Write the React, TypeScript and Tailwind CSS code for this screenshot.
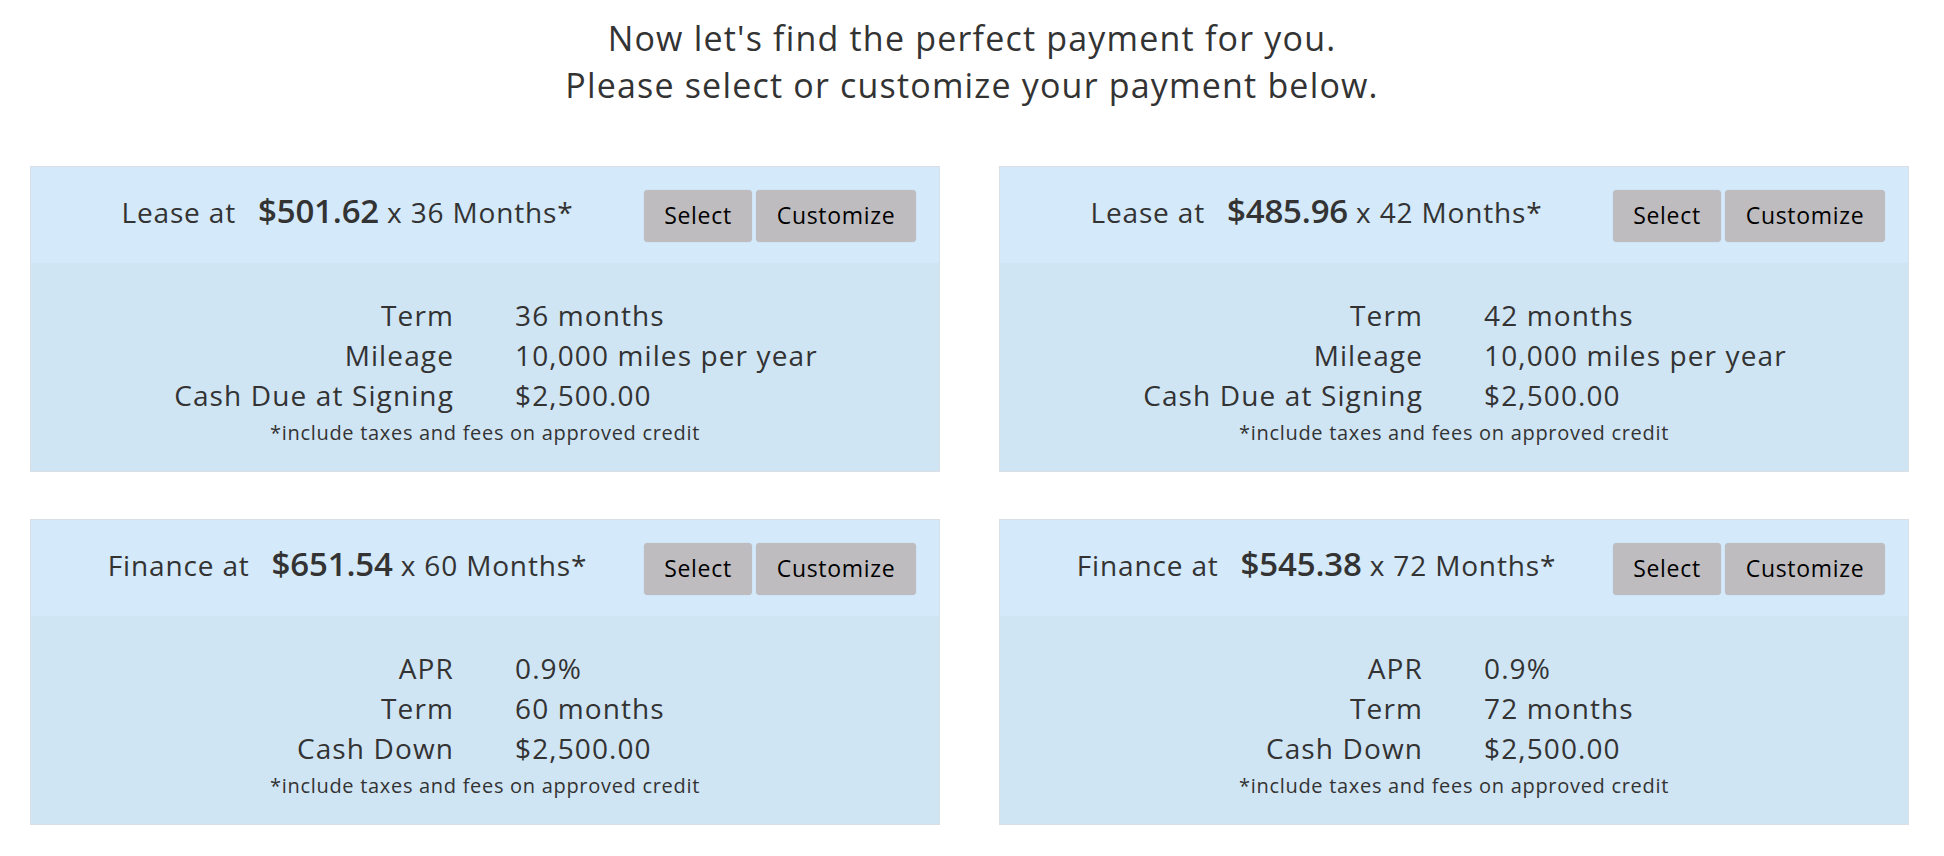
import React from "react";

type Row = { label: string; value: string };

type Offer = {
  kind: string;
  price: string;
  months: number;
  rows: Row[];
};

const OFFERS: Offer[] = [
  {
    kind: "Lease at",
    price: "$501.62",
    months: 36,
    rows: [
      { label: "Term", value: "36 months" },
      { label: "Mileage", value: "10,000 miles per year" },
      { label: "Cash Due at Signing", value: "$2,500.00" },
    ],
  },
  {
    kind: "Lease at",
    price: "$485.96",
    months: 42,
    rows: [
      { label: "Term", value: "42 months" },
      { label: "Mileage", value: "10,000 miles per year" },
      { label: "Cash Due at Signing", value: "$2,500.00" },
    ],
  },
  {
    kind: "Finance at",
    price: "$651.54",
    months: 60,
    rows: [
      { label: "APR", value: "0.9%" },
      { label: "Term", value: "60 months" },
      { label: "Cash Down", value: "$2,500.00" },
    ],
  },
  {
    kind: "Finance at",
    price: "$545.38",
    months: 72,
    rows: [
      { label: "APR", value: "0.9%" },
      { label: "Term", value: "72 months" },
      { label: "Cash Down", value: "$2,500.00" },
    ],
  },
];

function OfferCard({ offer }: { offer: Offer }) {
  return (
    <div className="border border-[#d9dfe5] bg-[#d0e5f4]">
      {/* header: price line + actions */}
      <div className="flex items-center h-[96px] bg-[#d4e9f9]">
        <div className="flex-1 pl-[20px] pb-[9px] flex items-baseline justify-center text-[28px] tracking-[0.03em] text-[#333]">
          <span>{offer.kind}</span>
          <span className="ml-[22px] text-[33px] font-semibold tracking-[-0.005em]">{offer.price}</span>
          <span className="ml-[8px]">x {offer.months} Months*</span>
        </div>
        <div className="shrink-0 flex gap-[4px] pr-[23px] pt-[1px]">
          <button className="h-[52px] w-[108px] rounded-[4px] bg-[#bfbcbf] text-[23px] tracking-[0.03em] text-black shadow-[0_0_1px_rgba(0,0,0,0.2)]">
            Select
          </button>
          <button className="h-[52px] w-[160px] rounded-[4px] bg-[#bfbcbf] text-[23px] tracking-[0.03em] text-black shadow-[0_0_1px_rgba(0,0,0,0.2)]">
            Customize
          </button>
        </div>
      </div>

      <div className="pt-[32px] pb-[23px] text-[#333]">
        {offer.rows.map((r) => (
          <div key={r.label} className="grid grid-cols-2 text-[28px] leading-[40px] tracking-[0.04em]">
            <div className="text-right pr-[31px]">{r.label}</div>
            <div className="pl-[30px]">{r.value}</div>
          </div>
        ))}
        <p className="mt-[3px] text-center text-[20px] leading-[30px] tracking-[0.035em]">
          *include taxes and fees on approved credit
        </p>
      </div>
    </div>
  );
}

export default function App() {
  return (
    <div className="min-h-screen bg-white font-['Open_Sans',sans-serif] text-[#333]">
      <div className="pt-[15px] text-center text-[34px] leading-[47px] tracking-[0.035em]">
        <p>Now let's find the perfect payment for you.</p>
        <p>Please select or customize your payment below.</p>
      </div>

      <div className="grid grid-cols-2 gap-x-[59px] gap-y-[47px] pl-[30px] pr-[35px] mt-[57px]">
        {OFFERS.map((o) => (
          <OfferCard key={o.price} offer={o} />
        ))}
      </div>
    </div>
  );
}
